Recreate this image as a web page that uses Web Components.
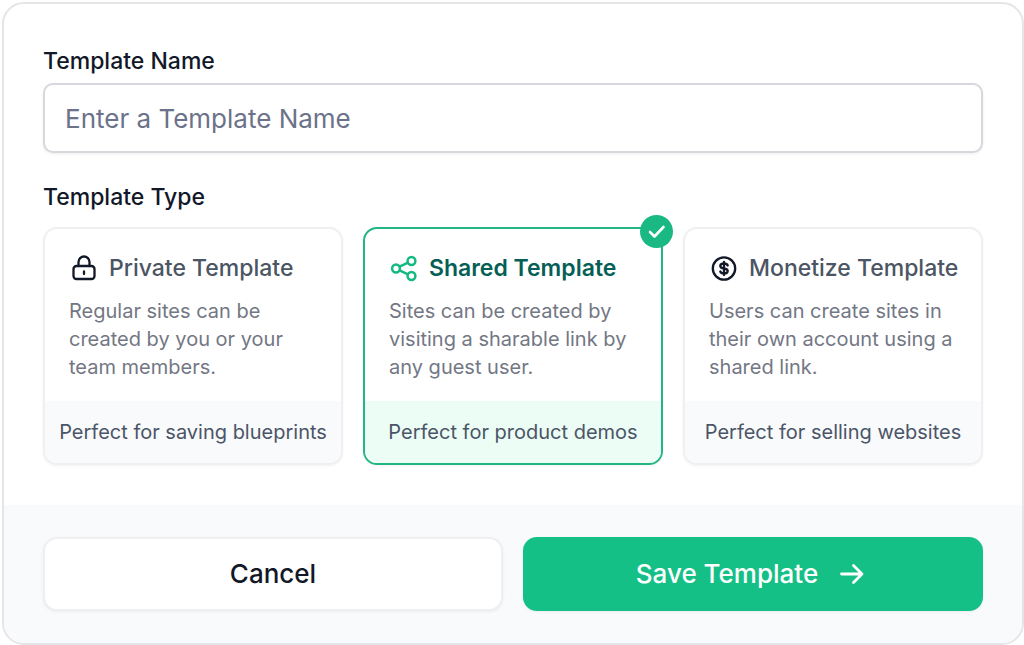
<!DOCTYPE html>
<html lang="en">
<head>
  <meta charset="UTF-8">
  <meta name="viewport" content="width=device-width, initial-scale=1.0">
  <title>Save Template</title>
  <style>
    body {
      margin: 0;
      padding: 2px 0 0 2px;
      background: #fff;
      font-family: Inter, "Liberation Sans", sans-serif;
      color: #111827;
    }
  </style>
</head>
<body>
  <template-dialog>
    <text-field label="Template Name" placeholder="Enter a Template Name"></text-field>
    <type-picker label="Template Type">
      <type-option name="Private Template" value="private">
        <svg slot="icon" width="30" height="30" viewBox="0 0 30 30" fill="none" stroke="#111827" stroke-width="2.3" stroke-linecap="round" stroke-linejoin="round" aria-hidden="true">
          <rect x="4.5" y="13" width="21" height="13" rx="3"/>
          <path d="M9.5 13V9a5.5 5.5 0 0 1 11 0v4M15 18.500v2.500"/>
        </svg>
        Regular sites can be created by you or your team members.
        <span slot="note">Perfect for saving blueprints</span>
      </type-option>
      <type-option name="Shared Template" value="shared" checked>
        <svg slot="icon" width="30" height="30" viewBox="0 0 30 30" fill="none" stroke="#14b981" stroke-width="2.5" aria-hidden="true">
          <circle cx="7" cy="15.5" r="3.9"/>
          <circle cx="22.5" cy="8" r="3.9"/>
          <circle cx="22.5" cy="23" r="3.9"/>
          <path d="M10.5 13.7l8.500-4M10.5 17.300l8.500 4"/>
        </svg>
        Sites can be created by visiting a sharable link by any guest user.
        <span slot="note">Perfect for product demos</span>
      </type-option>
      <type-option name="Monetize Template" value="monetize">
        <svg slot="icon" width="30" height="30" viewBox="0 0 30 30" fill="none" stroke="#111827" stroke-width="2.3" stroke-linecap="round" stroke-linejoin="round" aria-hidden="true">
          <circle cx="15" cy="15.5" r="11.2"/>
          <path d="M18.7 12.500c-.5-1.300-1.900-2-3.700-2-2.200 0-3.700.9-3.700 2.500s1.500 2.200 3.700 2.500 3.700.9 3.700 2.500-1.500 2.500-3.700 2.500c-1.800 0-3.200-.7-3.700-2M15 9v13"/>
        </svg>
        Users can create sites in their own account using a shared link.
        <span slot="note">Perfect for selling websites</span>
      </type-option>
    </type-picker>
    <action-button slot="actions">Cancel</action-button>
    <action-button slot="actions" primary>
      Save Template
      <svg slot="icon" width="30" height="24" viewBox="0 0 30 24" fill="none" stroke="#fff" stroke-width="2.8" stroke-linecap="round" stroke-linejoin="round" aria-hidden="true">
        <path d="M1.5 12h20M13.5 3.500l8.500 8.500-8.500 8.500"/>
      </svg>
    </action-button>
  </template-dialog>

  <script>
    class TemplateDialog extends HTMLElement {
      connectedCallback() {
        this.attachShadow({ mode: 'open' });
        this.shadowRoot.innerHTML = `
          <style>
            :host {
              display: block;
              border: 2px solid #e5e5e7;
              border-radius: 22px;
              overflow: hidden;
              background: #fff;
            }
            .content {
              display: flex;
              flex-direction: column;
              gap: 28px;
              padding: 41px 39px 40px;
            }
            footer {
              display: grid;
              grid-template-columns: 1fr 1fr;
              gap: 20px;
              padding: 32px 39px;
              background: #f9fafc;
            }
          </style>
          <div class="content"><slot></slot></div>
          <footer><slot name="actions"></slot></footer>
        `;
      }
    }
    customElements.define('template-dialog', TemplateDialog);

    class TextField extends HTMLElement {
      connectedCallback() {
        this.attachShadow({ mode: 'open' });
        this.shadowRoot.innerHTML = `
          <style>
            :host {
              display: flex;
              flex-direction: column;
              gap: 6px;
            }
            label {
              font-size: 23px;
              font-weight: 500;
              line-height: 32px;
            }
            input {
              box-sizing: border-box;
              width: 100%;
              height: 70px;
              padding: 0 20px;
              border: 2px solid #d6d8dd;
              border-radius: 10px;
              background: #fff;
              box-shadow: 0 1px 3px rgba(17, 24, 39, 0.08);
              font: 400 26px/36px Inter, "Liberation Sans", sans-serif;
              color: #111827;
              outline: none;
            }
            input::placeholder {
              color: #6b7289;
              opacity: 1;
            }
            input:focus {
              border-color: #14b981;
            }
          </style>
          <label for="field">${this.getAttribute('label')}</label>
          <input id="field" type="text" placeholder="${this.getAttribute('placeholder')}">
        `;
      }
    }
    customElements.define('text-field', TextField);

    class TypePicker extends HTMLElement {
      connectedCallback() {
        this.attachShadow({ mode: 'open' });
        this.shadowRoot.innerHTML = `
          <style>
            :host {
              display: block;
            }
            .group {
              display: flex;
              flex-direction: column;
              gap: 14px;
            }
            .title {
              font-size: 23px;
              font-weight: 500;
              line-height: 32px;
            }
            .options {
              display: grid;
              grid-template-columns: repeat(3, 1fr);
              gap: 20px;
            }
          </style>
          <div class="group" role="radiogroup" aria-labelledby="title">
            <div class="title" id="title">${this.getAttribute('label')}</div>
            <div class="options"><slot></slot></div>
          </div>
        `;

        // radios in separate shadow roots don't group, so clear the others here
        this.addEventListener('option-selected', (event) => {
          this.querySelectorAll('type-option').forEach((option) => {
            option.toggleAttribute('checked', option === event.target);
          });
        });
      }
    }
    customElements.define('type-picker', TypePicker);

    class TypeOption extends HTMLElement {
      static observedAttributes = ['checked'];

      connectedCallback() {
        this.attachShadow({ mode: 'open' });
        this.shadowRoot.innerHTML = `
          <style>
            :host {
              display: grid;
              position: relative;
            }
            label {
              display: flex;
              flex-direction: column;
              border: 2px solid #eff0f2;
              border-radius: 14px;
              overflow: hidden;
              background: #fff;
              box-shadow: 0 1px 3px rgba(17, 24, 39, 0.05);
              cursor: pointer;
            }
            input {
              position: absolute;
              opacity: 0;
            }
            .body {
              flex: 1;
              padding: 22px 20px 20px 24px;
            }
            .heading {
              display: flex;
              align-items: center;
              gap: 10px;
              margin-bottom: 12px;
              font-size: 23px;
              font-weight: 500;
              line-height: 34px;
              white-space: nowrap;
              color: #4b5563;
            }
            .text {
              font-size: 20px;
              line-height: 28px;
              color: #737784;
            }
            .note {
              padding: 17px 0;
              background: #f8fafc;
              font-size: 20px;
              line-height: 28px;
              text-align: center;
              white-space: nowrap;
              color: #4b5567;
            }
            .badge {
              display: none;
              position: absolute;
              top: -12px;
              right: -10px;
            }
            :host([checked]) label {
              border-color: #24b585;
            }
            :host([checked]) .heading {
              font-weight: 600;
              color: #065f56;
            }
            :host([checked]) .note {
              background: #ebfdf4;
            }
            :host([checked]) .badge {
              display: block;
            }
            label:focus-within {
              outline: 2px solid #a7f3d0;
            }
          </style>
          <label>
            <input type="radio" value="${this.getAttribute('value')}">
            <div class="body">
              <div class="heading">
                <slot name="icon"></slot>
                <span>${this.getAttribute('name')}</span>
              </div>
              <div class="text"><slot></slot></div>
            </div>
            <div class="note"><slot name="note"></slot></div>
          </label>
          <svg class="badge" width="33" height="33" viewBox="0 0 33 33" fill="none" aria-hidden="true">
            <circle cx="16.5" cy="16.5" r="16.5" fill="#1ab883"/>
            <path d="M10 17l4.500 4.500 9-9.500" stroke="#fff" stroke-width="2.6" stroke-linecap="round" stroke-linejoin="round"/>
          </svg>
        `;
        this.input = this.shadowRoot.querySelector('input');
        this.input.checked = this.hasAttribute('checked');
        this.input.addEventListener('change', () => {
          this.dispatchEvent(new CustomEvent('option-selected', { bubbles: true }));
        });
      }

      attributeChangedCallback() {
        if (this.input) {
          this.input.checked = this.hasAttribute('checked');
        }
      }
    }
    customElements.define('type-option', TypeOption);

    class ActionButton extends HTMLElement {
      connectedCallback() {
        this.attachShadow({ mode: 'open' });
        this.shadowRoot.innerHTML = `
          <style>
            :host {
              display: grid;
            }
            button {
              display: flex;
              align-items: center;
              justify-content: center;
              gap: 22px;
              padding: 17px 20px;
              border: 2px solid #eeeff1;
              border-radius: 14px;
              background: #fff;
              box-shadow: 0 1px 3px rgba(17, 24, 39, 0.06);
              font: 500 26px/36px Inter, "Liberation Sans", sans-serif;
              color: #111827;
              cursor: pointer;
            }
            :host([primary]) button {
              border-color: #14c086;
              background: #14c086;
              color: #fff;
            }
          </style>
          <button type="button">
            <span><slot></slot></span>
            <slot name="icon"></slot>
          </button>
        `;
      }
    }
    customElements.define('action-button', ActionButton);
  </script>
</body>
</html>
